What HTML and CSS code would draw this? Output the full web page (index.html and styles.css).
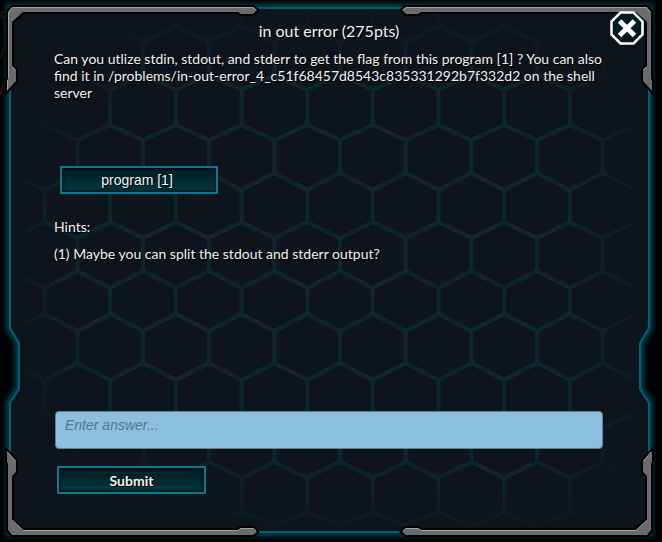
FILE: index.html
```html
<!DOCTYPE html>
<html lang="en">
<head>
    <meta charset="utf-8">
    <title>in out error</title>
    <link rel="stylesheet" href="styles.css">
</head>
<body>
    <div class="problem">
        <svg class="frame" viewBox="0 0 662 542" preserveAspectRatio="none" aria-hidden="true">
            <defs>
                <filter id="glow" x="-10%" y="-10%" width="120%" height="120%">
                    <feGaussianBlur stdDeviation="2"/>
                </filter>
                <filter id="soft"><feGaussianBlur stdDeviation="0.7"/></filter>
                <filter id="fade"><feGaussianBlur stdDeviation="28"/></filter>
                <mask id="hexMask">
                    <path d="M30 190L130 40H520L622 110V430L560 510H250L40 400Z" fill="#fff" filter="url(#fade)"/>
                </mask>
                <pattern id="hex" x="44.6" y="0" width="65.65" height="542" patternUnits="userSpaceOnUse">
                    <path d="M0 14V26L32.8 42V75L0 90V125L32.8 140V173L0 190V222L32.8 238V271L0 288V314L32.8 331V363L0 380V413L32.8 428V462L0 478V512L32.8 526
                        M65.65 14V26L32.8 42M32.8 75L65.65 90V125L32.8 140M32.8 173L65.65 190V222L32.8 238M32.8 271L65.65 288V314L32.8 331M32.8 363L65.65 380V413L32.8 428M32.8 462L65.65 478V512L32.8 526" fill="none" stroke="#11262f" stroke-width="4"/>
                </pattern>
                <path id="corner" d="M8 12L12 7H253L257 10L253 14H241L238 12H23L12 22V66L16 70V81L7 91V80L8 79Z"/>
                <path id="panel" d="M10 8H649V328L640 343V389L649 403V532H10V403L19 389V343L10 328Z"/>
            </defs>

            <rect width="662" height="542" fill="#000203"/>
            <g class="behind">
                <text x="0" y="18">o</text>
                <text x="0" y="58">l</text>
                <text x="0" y="94">l</text>
            </g>
            <use href="#panel" fill="none" stroke="#003b42" stroke-width="9" filter="url(#glow)"/>
            <use href="#panel" fill="#0d141b" stroke="#00607a" stroke-width="2"/>
            <g mask="url(#hexMask)">
                <rect x="26" y="14" width="606" height="514" fill="url(#hex)" filter="url(#soft)"/>
            </g>

            <!-- corner plates: black outline first, metal on top -->
            <g fill="#000" stroke="#000" stroke-width="4">
                <use href="#corner"/>
                <use href="#corner" transform="translate(659 0) scale(-1 1)"/>
                <use href="#corner" transform="translate(0 542) scale(1 -1)"/>
                <use href="#corner" transform="translate(659 542) scale(-1 -1)"/>
            </g>
            <g fill="#6b6b6b">
                <use href="#corner"/>
                <use href="#corner" transform="translate(659 0) scale(-1 1)"/>
                <use href="#corner" transform="translate(0 542) scale(1 -1)"/>
                <use href="#corner" transform="translate(659 542) scale(-1 -1)"/>
            </g>
            <g fill="none" stroke="#a0a0a0" stroke-width="1">
                <path d="M8.500 78V12.500L12.500 7.500H253L256 10M12.500 67L15.500 70.500M7.500 90V80"/>
                <path d="M403 10L406 7.500H646L650 12"/>
                <path d="M643.500 70L646 67"/>
                <path d="M7.500 452L15.500 461M12.500 520L23 530.500H238L241 528.500H253L256 531"/>
                <path d="M403 531L406 528.500H418L421 530.500H636L647 520M643.500 461L651 452"/>
            </g>
        </svg>

        <button class="close" type="button" aria-label="Close">
            <svg viewBox="0 0 34 34" aria-hidden="true">
                <path d="M10.500 1.500H23.500L32.500 10.500V23.500L23.500 32.500H10.500L1.500 23.500V10.500Z" fill="#021a22" stroke="#fff" stroke-width="2.500"/>
                <path d="M9.500 10L24.500 24.500M24.500 10L9.500 24.500" stroke="#fff" stroke-width="5"/>
            </svg>
        </button>

        <h1 class="title">in out error (275pts)</h1>
        <p class="description">Can you utlize stdin, stdout, and stderr to get the flag from this program [1] ? You can also find it in /problems/in-out-error_4_c51f68457d8543c835331292b7f332d2 on the shell server</p>

        <button class="btn program" type="button">program [1]</button>

        <div class="hints">
            <p>Hints:</p>
            <p>(1) Maybe you can split the stdout and stderr output?</p>
        </div>

        <form class="answer">
            <input class="answer-input" type="text" placeholder="Enter answer..." aria-label="Enter answer">
            <button class="btn submit" type="submit">Submit</button>
        </form>
    </div>
</body>
</html>
```
FILE: styles.css
```css
* {
    box-sizing: border-box;
}

body {
    margin: 0;
    background: #000203;
    color: #f2f2f2;
    font: 14px/17px Lato, sans-serif;
}

h1, p {
    margin: 0;
}

.problem {
    position: relative;
    display: flex;
    flex-direction: column;
    align-items: flex-start;
    min-height: 100vh;
    padding: 21px 54px 48px;
    text-shadow: 1px 1px 1px #000;
}

.frame {
    position: absolute;
    top: 0;
    left: 0;
    z-index: -1;
    width: 100%;
    height: 100%;
}

.behind {
    fill: #3b1c05;
    font: italic 13px "Liberation Sans", sans-serif;
}

.close {
    position: absolute;
    top: 11px;
    right: 18px;
    width: 34px;
    height: 34px;
    padding: 0;
    border: 0;
    background: none;
    cursor: pointer;
}

.close svg {
    display: block;
}

.title {
    align-self: center;
    margin-right: 4px;
    font-size: 16px;
    line-height: 20px;
    font-weight: normal;
}

.description {
    margin-top: 9px;
}

.btn {
    height: 28px;
    padding: 0;
    border: 2px solid #067a91;
    border-radius: 1px;
    background: linear-gradient(#001a20, #003a44);
    box-shadow: inset 0 0 3px 1px #000c10;
    color: #f2f2f2;
    text-shadow: 1px 1px 1px #000;
    cursor: pointer;
}

.program {
    width: 158px;
    margin: 65px 0 0 6px;
    padding-right: 4px;
    font: 14px "Liberation Sans", Arial, sans-serif;
}

.hints {
    display: flex;
    flex-direction: column;
    gap: 10px;
    margin-top: 24px;
}

.answer {
    align-self: stretch;
    margin-top: auto;
}

.answer-input {
    display: block;
    width: calc(100% - 6px);
    height: 38px;
    margin-left: 1px;
    padding: 0 9px 10px;
    border: 1px solid #5c8296;
    border-radius: 4px;
    background: #8bbfdb;
    color: #10222c;
    font: 14px "Liberation Sans", Arial, sans-serif;
}

.answer-input::placeholder {
    color: #58798b;
    font-style: italic;
    opacity: 1;
}

.submit {
    width: 149px;
    margin: 17px 0 0 3px;
    font: bold 14px Lato, sans-serif;
}
```
